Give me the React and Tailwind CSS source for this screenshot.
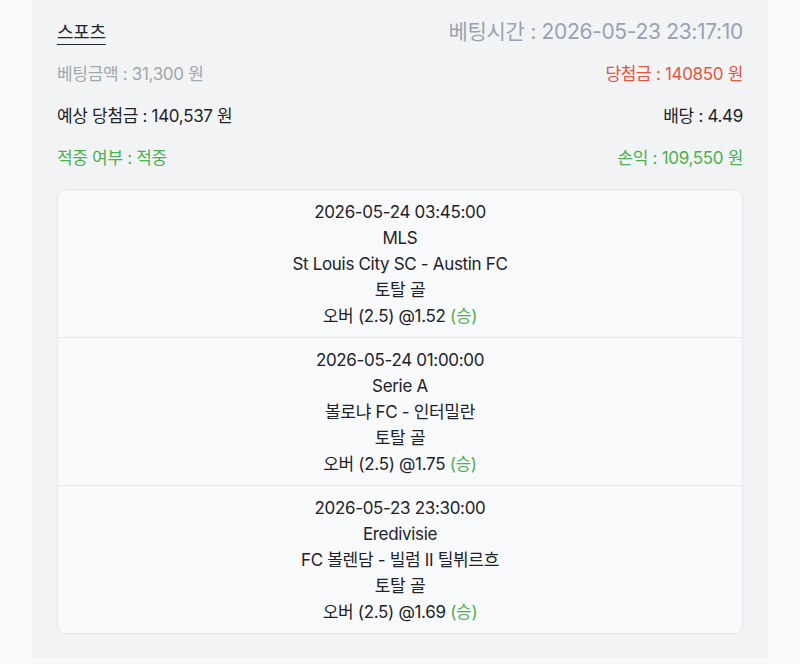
import React from "react";

const matches = [
  { time: "2026-05-24 03:45:00", league: "MLS", teams: "St Louis City SC - Austin FC", market: "토탈 골", pick: "오버 (2.5) @1.52" },
  { time: "2026-05-24 01:00:00", league: "Serie A", teams: "볼로냐 FC - 인터밀란", market: "토탈 골", pick: "오버 (2.5) @1.75" },
  { time: "2026-05-23 23:30:00", league: "Eredivisie", teams: "FC 볼렌담 - 빌럼 II 틸뷔르흐", market: "토탈 골", pick: "오버 (2.5) @1.69" },
];

export default function App() {
  return (
    <div
      className="min-h-[664px] w-[800px] bg-[#f8f9fb]"
      style={{ fontFamily: "Inter, 'Noto Sans CJK KR', sans-serif" }}
    >
      <div className="mx-[32px] w-[736px] bg-[#f2f3f5] px-[25px] pt-[18px] pb-[24px] tracking-[-0.02em]">
        <div className="flex h-[28px] items-center justify-between">
          <span className="text-[18px] text-[#1f2329] underline underline-offset-[5px] decoration-[1px]">스포츠</span>
          <span className="text-[21px] text-[#98a2b3]">베팅시간 : 2026-05-23 23:17:10</span>
        </div>
        <div className="mt-[8px] flex h-[42px] items-center justify-between text-[17px]">
          <span className="text-[#a3a6ab]">베팅금액 : 31,300 원</span>
          <span className="text-[#e8533f]">당첨금 : 140850 원</span>
        </div>
        <div className="flex h-[42px] items-center justify-between text-[17px] text-[#1f2329]">
          <span>예상 당첨금 : 140,537 원</span>
          <span>배당 : 4.49</span>
        </div>
        <div className="flex h-[42px] items-center justify-between text-[17px] text-[#4caf50]">
          <span>적중 여부 : 적중</span>
          <span>손익 : 109,550 원</span>
        </div>
        <div className="mt-[9px] overflow-hidden rounded-lg border border-[#e2e5ea] bg-[#f8f9fb]">
          {matches.map((m, i) => (
            <div
              key={i}
              className={`flex flex-col items-center pt-[9px] pb-[8px] text-[17px] leading-[26px] text-[#1f2329] ${i > 0 ? "border-t border-[#e6e8ec]" : ""}`}
            >
              <div>{m.time}</div>
              <div>{m.league}</div>
              <div>{m.teams}</div>
              <div>{m.market}</div>
              <div>
                {m.pick} <span className="text-[#4caf50]">(승)</span>
              </div>
            </div>
          ))}
        </div>
      </div>
    </div>
  );
}
